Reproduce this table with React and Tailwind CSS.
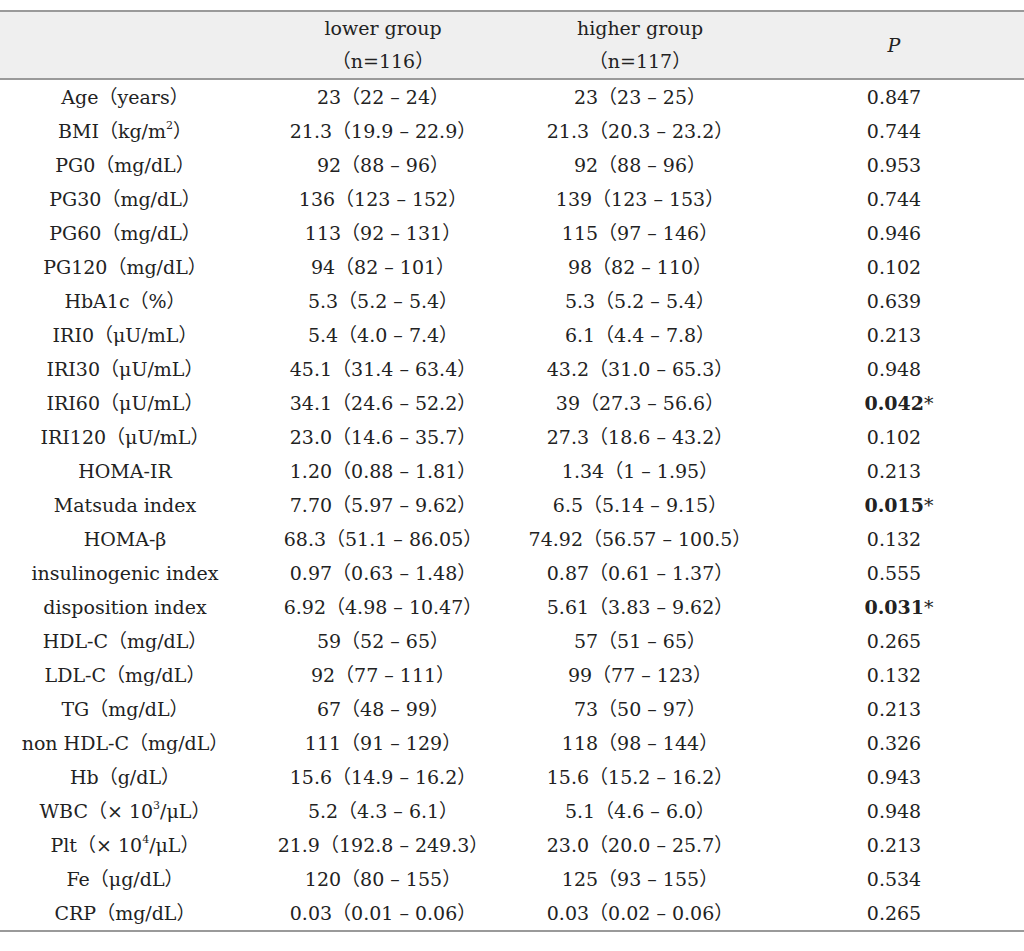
import React from "react";

const rows = [
  [<>Age（years）</>, "23（22 – 24）", "23（23 – 25）", "0.847"],
  [<>BMI（kg/m<sup className="text-[11px]">2</sup>）</>, "21.3（19.9 – 22.9）", "21.3（20.3 – 23.2）", "0.744"],
  [<>PG0（mg/dL）</>, "92（88 – 96）", "92（88 – 96）", "0.953"],
  [<>PG30（mg/dL）</>, "136（123 – 152）", "139（123 – 153）", "0.744"],
  [<>PG60（mg/dL）</>, "113（92 – 131）", "115（97 – 146）", "0.946"],
  [<>PG120（mg/dL）</>, "94（82 – 101）", "98（82 – 110）", "0.102"],
  [<>HbA1c（%）</>, "5.3（5.2 – 5.4）", "5.3（5.2 – 5.4）", "0.639"],
  [<>IRI0（μU/mL）</>, "5.4（4.0 – 7.4）", "6.1（4.4 – 7.8）", "0.213"],
  [<>IRI30（μU/mL）</>, "45.1（31.4 – 63.4）", "43.2（31.0 – 65.3）", "0.948"],
  [<>IRI60（μU/mL）</>, "34.1（24.6 – 52.2）", "39（27.3 – 56.6）", "0.042", true],
  [<>IRI120（μU/mL）</>, "23.0（14.6 – 35.7）", "27.3（18.6 – 43.2）", "0.102"],
  [<>HOMA-IR</>, "1.20（0.88 – 1.81）", "1.34（1 – 1.95）", "0.213"],
  [<>Matsuda index</>, "7.70（5.97 – 9.62）", "6.5（5.14 – 9.15）", "0.015", true],
  [<>HOMA-β</>, "68.3（51.1 – 86.05）", "74.92（56.57 – 100.5）", "0.132"],
  [<>insulinogenic index</>, "0.97（0.63 – 1.48）", "0.87（0.61 – 1.37）", "0.555"],
  [<>disposition index</>, "6.92（4.98 – 10.47）", "5.61（3.83 – 9.62）", "0.031", true],
  [<>HDL-C（mg/dL）</>, "59（52 – 65）", "57（51 – 65）", "0.265"],
  [<>LDL-C（mg/dL）</>, "92（77 – 111）", "99（77 – 123）", "0.132"],
  [<>TG（mg/dL）</>, "67（48 – 99）", "73（50 – 97）", "0.213"],
  [<>non HDL-C（mg/dL）</>, "111（91 – 129）", "118（98 – 144）", "0.326"],
  [<>Hb（g/dL）</>, "15.6（14.9 – 16.2）", "15.6（15.2 – 16.2）", "0.943"],
  [<>WBC（× 10<sup className="text-[11px]">3</sup>/μL）</>, "5.2（4.3 – 6.1）", "5.1（4.6 – 6.0）", "0.948"],
  [<>Plt（× 10<sup className="text-[11px]">4</sup>/μL）</>, "21.9（192.8 – 249.3）", "23.0（20.0 – 25.7）", "0.213"],
  [<>Fe（μg/dL）</>, "120（80 – 155）", "125（93 – 155）", "0.534"],
  [<>CRP（mg/dL）</>, "0.03（0.01 – 0.06）", "0.03（0.02 – 0.06）", "0.265"],
];

const cols = "grid grid-cols-[250px_266px_248px_260px]";

export default function App() {
  return (
    <div
      className="w-[1024px] h-[951px] bg-white pt-[10px] text-[19px] text-[#222]"
      style={{ fontFamily: '"DejaVu Serif", "Noto Sans CJK JP", serif' }}
    >
      <div className={`${cols} h-[70px] border-t-2 border-b-2 border-[#9a9a9a] bg-[#efefef]`}>
        <div />
        <div className="flex flex-col items-center justify-center">
          <div className="h-[33px] flex items-center">lower group</div>
          <div className="h-[33px] flex items-center">（n=116）</div>
        </div>
        <div className="flex flex-col items-center justify-center">
          <div className="h-[33px] flex items-center">higher group</div>
          <div className="h-[33px] flex items-center">（n=117）</div>
        </div>
        <div className="flex items-center justify-center italic">P</div>
      </div>
      <div className="border-b-2 border-[#9a9a9a]">
        {rows.map((r, i) => (
          <div key={i} className={`${cols} h-[34px]`}>
            <div className="flex items-center justify-center whitespace-nowrap">{r[0]}</div>
            <div className="flex items-center justify-center whitespace-nowrap">{r[1]}</div>
            <div className="flex items-center justify-center whitespace-nowrap">{r[2]}</div>
            <div className="flex items-center justify-center whitespace-nowrap">
              {r[4] ? (
                <span className="pl-[10px]">
                  <b className="font-bold">{r[3]}</b>*
                </span>
              ) : (
                r[3]
              )}
            </div>
          </div>
        ))}
      </div>
    </div>
  );
}
